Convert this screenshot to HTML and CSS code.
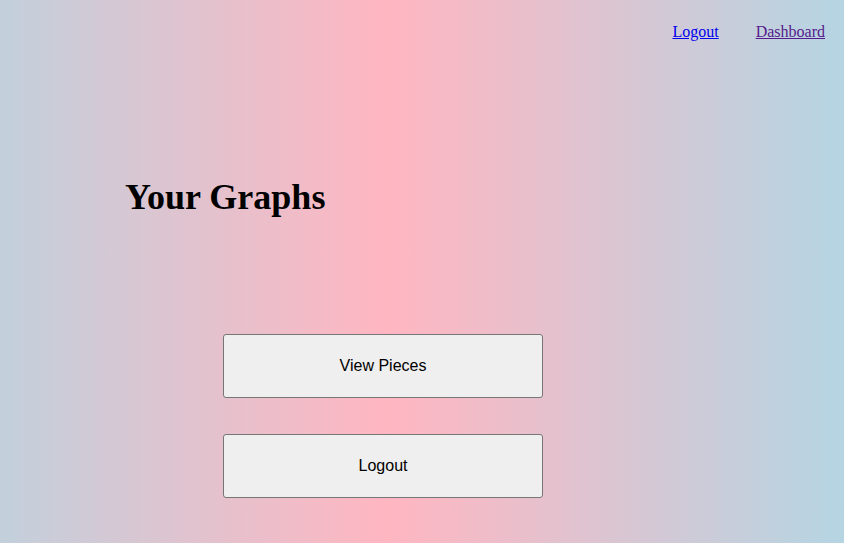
FILE: index.html
```html
<!DOCTYPE html>
<html>
<head>
<meta charset="utf-8">
<link rel="stylesheet" href="styles.css">
</head>
<body>
<div class="page">
  <nav class="topnav">
    <a href="#logout" class="navlink">Logout</a>
    <a href="#dashboard" class="navlink visited">Dashboard</a>
  </nav>
  <h1 class="title">Your Graphs</h1>
  <div class="actions">
    <button class="btn">View Pieces</button>
    <button class="btn">Logout</button>
  </div>
</div>
</body>
</html>
```
FILE: styles.css
```css
html, body {
  margin: 0;
  padding: 0;
  height: 100%;
}
body {
  background: linear-gradient(to right, #c2d0dc 0%, #ffb6c1 46%, #b5d5e3 100%);
  font-family: "Liberation Serif", "Times New Roman", serif;
  overflow: hidden;
}
.page {
  display: flex;
  flex-direction: column;
  height: 100%;
}
.topnav {
  display: flex;
  justify-content: flex-end;
  gap: 37px;
  padding: 23px 19px 0 0;
  font-size: 16px;
  line-height: 18px;
}
.navlink {
  color: #0000ee;
  text-decoration: underline;
}
.navlink.visited {
  color: #551a8b;
}
.title {
  margin: 136px 0 0 125px;
  font-size: 36px;
  line-height: 40px;
  font-weight: bold;
  color: #000;
}
.actions {
  display: flex;
  flex-direction: column;
  gap: 36px;
  margin: 117px 0 0 223px;
}
.btn {
  width: 320px;
  height: 64px;
  box-sizing: border-box;
  background: #efefef;
  border: 1px solid #767676;
  border-radius: 3px;
  font-family: "Liberation Sans", Arial, sans-serif;
  font-size: 16px;
  color: #000;
  padding: 0;
}
```
